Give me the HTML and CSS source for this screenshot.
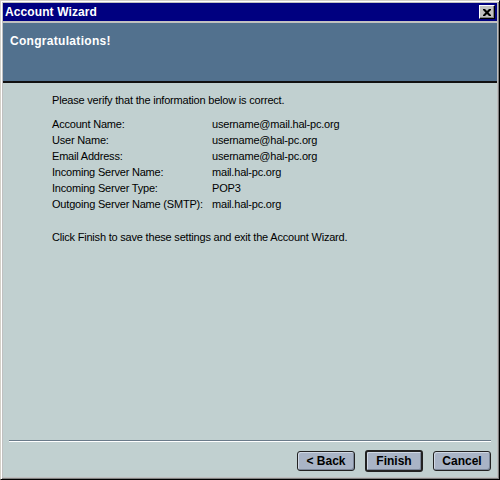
FILE: index.html
```html
<!DOCTYPE html>
<html lang="en">
<head>
  <meta charset="UTF-8" />
  <title>Account Wizard</title>
  <link rel="stylesheet" href="styles.css">
</head>
<body>
  <div class="window">
    <div class="titlebar">
      <span class="title">Account Wizard</span>
      <button class="close" title="Close">
        <svg width="8" height="7" viewBox="0 0 8 7"><path d="M0 0h2l2 2 2-2h2v1l-2.5 2.5L8 6v1H6L4 5 2 7H0V6l2.5-2.5L0 1z" fill="#000"/></svg>
      </button>
    </div>
    <div class="banner">
      <h1>Congratulations!</h1>
    </div>
    <main class="content">
      <p class="intro">Please verify that the information below is correct.</p>
      <dl class="summary">
        <dt>Account Name:</dt><dd>username@mail.hal-pc.org</dd>
        <dt>User Name:</dt><dd>username@hal-pc.org</dd>
        <dt>Email Address:</dt><dd>username@hal-pc.org</dd>
        <dt>Incoming Server Name:</dt><dd>mail.hal-pc.org</dd>
        <dt>Incoming Server Type:</dt><dd>POP3</dd>
        <dt>Outgoing Server Name (SMTP):</dt><dd>mail.hal-pc.org</dd>
      </dl>
      <p class="outro">Click Finish to save these settings and exit the Account Wizard.</p>
    </main>
    <footer class="footer">
      <div class="sep"></div>
      <div class="buttons">
        <button class="btn">&lt; Back</button>
        <button class="btn default">Finish</button>
        <button class="btn">Cancel</button>
      </div>
    </footer>
  </div>
</body>
</html>
```

FILE: styles.css
```css
body {
  margin: 0;
  font-family: "Liberation Sans", Arial, sans-serif;
  font-size: 11px;
  color: #000;
  background: #c0c0c0;
}
.window {
  width: 500px;
  height: 480px;
  box-sizing: border-box;
  display: flex;
  flex-direction: column;
  background: #c0c0c0;
  border: 1px solid;
  border-color: #d4d0c8 #000 #000 #d4d0c8;
  box-shadow: inset 1px 1px #fff, inset -1px -1px #808080;
  padding: 2px;
}
.titlebar {
  height: 18px;
  display: flex;
  align-items: center;
  justify-content: space-between;
  background: #000080;
  color: #fff;
  padding: 0 2px 0 2px;
  margin-bottom: 2px;
}
.title {
  font-weight: 700;
  font-size: 12px;
  letter-spacing: 0.1px;
}
.close {
  width: 16px;
  height: 14px;
  padding: 0;
  display: flex;
  align-items: center;
  justify-content: center;
  background: #c0c0c0;
  border: 1px solid;
  border-color: #fff #000 #000 #fff;
  box-shadow: inset -1px -1px #808080;
}
.banner {
  height: 48px;
  background: #52718e;
  border-bottom: 2px solid #111;
  padding: 10px 7px 0;
}
.banner h1 {
  margin: 0;
  color: #fff;
  font-size: 12px;
  font-weight: 700;
  line-height: 16px;
  letter-spacing: 0.3px;
}
.content {
  flex: 1;
  background: #c1d0d0;
  padding: 9px 0 0 49px;
  letter-spacing: -0.2px;
}
.content p {
  margin: 0;
  line-height: 16px;
}
.summary {
  display: grid;
  grid-template-columns: 160px auto;
  margin: 8px 0 17px;
  line-height: 16px;
}
.summary dt, .summary dd {
  margin: 0;
}
.footer {
  background: #c1d0d0;
  padding: 0 6px 5px 6px;
}
.sep {
  height: 1px;
  background: #6b7b8a;
  border-bottom: 1px solid #fff;
  margin-bottom: 9px;
}
.buttons {
  display: flex;
  justify-content: flex-end;
  gap: 10px;
}
.btn {
  width: 58px;
  height: 20px;
  padding: 0;
  font-family: inherit;
  font-size: 12px;
  font-weight: 700;
  color: #000;
  background: #a9b4c6;
  border: 1px solid #222;
  border-radius: 3px;
  box-shadow: inset 1px 1px #d0d8e4, inset -1px -1px #7b8698;
}
.btn.default {
  border-width: 2px;
  height: 22px;
  margin-top: -1px;
}
```
